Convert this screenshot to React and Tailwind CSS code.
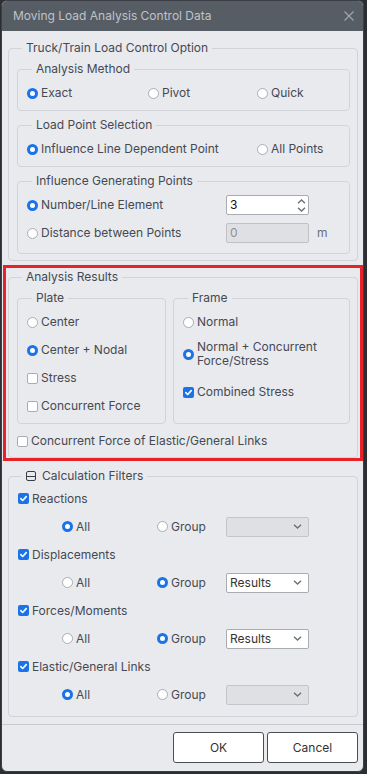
import clsx from 'clsx'

function Radio({ on }) {
    return on
        ? <span className="block w-[11px] h-[11px] shrink-0 rounded-full border-[3px] border-[#1a73e8] bg-white" />
        : <span className="block w-[11px] h-[11px] shrink-0 rounded-full border border-[#a9acb2] bg-white" />
}

function Check({ on }) {
    if (!on) return <span className="block w-[11px] h-[11px] shrink-0 rounded-[2px] border border-[#a9acb2] bg-white" />
    return (
        <span className="flex items-center justify-center w-[11px] h-[11px] shrink-0 rounded-[2px] bg-[#1a73e8]">
            <svg width="9" height="9" viewBox="0 0 9 9">
                <path d="M1.8 4.6 L3.7 6.5 L7.2 2.6" fill="none" stroke="white" strokeWidth="1.6" strokeLinecap="round" strokeLinejoin="round" />
            </svg>
        </span>
    )
}

function Opt({ radio, on, label, className }) {
    return (
        <div className={clsx('flex items-center', className)}>
            {radio ? <Radio on={on} /> : <Check on={on} />}
            <span className="ml-[3px] whitespace-nowrap">{label}</span>
        </div>
    )
}

function Group({ label, className, children }) {
    return (
        <fieldset className={clsx('border border-[#d2d3d8] rounded-[4px] min-w-0', className)}>
            <legend className="ml-[5px] px-[4px] leading-[16px]">{label}</legend>
            {children}
        </fieldset>
    )
}

function Chevron({ up }) {
    return (
        <svg width="9" height="5" viewBox="0 0 9 5">
            <path d={up ? 'M1 4.2 L4.5 1 L8 4.2' : 'M1 0.8 L4.5 4 L8 0.8'} fill="none" stroke="#6c7077" strokeWidth="1.4" />
        </svg>
    )
}

function Select({ value }) {
    return (
        <div className={clsx('w-[83px] h-[20px] rounded-[2px] border flex items-center justify-between pl-[3px] pr-[6px]',
            value ? 'bg-white border-[#a9acb2]' : 'bg-[#dfe0e4] border-[#c3c5ca]')}>
            <span className="text-[#333]">{value}</span>
            <Chevron />
        </div>
    )
}

function FilterRows({ label, all, value }) {
    return (
        <>
            <div className="h-[27px] flex items-center">
                <Opt on label={label} />
            </div>
            <div className="h-[29px] flex items-center pl-[44px]">
                <Opt radio on={all} label="All" className="w-[95px]" />
                <Opt radio on={!all} label="Group" className="w-[69px]" />
                <Select value={value} />
            </div>
        </>
    )
}

export default function App() {
    return (
        <div className="min-h-screen bg-[#2b2f34] pl-[1px] font-['Inter',sans-serif] text-[12px] text-[#454952]">
            <div className="w-[363px] h-[772px] flex flex-col overflow-hidden rounded-[6px] border border-[#3b3f45] bg-[#e9eaee]">
                <div className="h-[30px] shrink-0 bg-[#575d65] flex items-center justify-between pl-[11px] pr-[9px]">
                    <span className="text-[#bfc3c8]">Moving Load Analysis Control Data</span>
                    <svg width="10" height="10" viewBox="0 0 10 10">
                        <path d="M0.5 0.5 L9.5 9.5 M9.5 0.5 L0.5 9.5" stroke="#a2a7ad" strokeWidth="1.1" />
                    </svg>
                </div>

                <div className="pl-[6px] pr-[5px] pt-[9px]">
                    <Group label="Truck/Train Load Control Option" className="pl-[8px] pr-[7px] pt-[5px] pb-[6px]">
                        <div className="flex flex-col gap-[6px]">
                            <Group label="Analysis Method" className="pl-[9px] pt-[6px] pb-[7px]">
                                <div className="h-[20px] flex items-center">
                                    <Opt radio on label="Exact" className="w-[121px]" />
                                    <Opt radio label="Pivot" className="w-[109px]" />
                                    <Opt radio label="Quick" />
                                </div>
                            </Group>
                            <Group label="Load Point Selection" className="pl-[9px] pt-[6px] pb-[7px]">
                                <div className="h-[20px] flex items-center">
                                    <Opt radio on label="Influence Line Dependent Point" className="w-[230px]" />
                                    <Opt radio label="All Points" />
                                </div>
                            </Group>
                            <Group label="Influence Generating Points" className="pl-[9px] pt-[2px] pb-[6px]">
                                <div className="h-[28px] flex items-center">
                                    <Opt radio on label="Number/Line Element" className="w-[199px]" />
                                    <div className="w-[83px] h-[20px] rounded-[2px] border border-[#a9acb2] bg-white flex items-center justify-between pl-[3px] pr-[2px]">
                                        <span className="text-[#111]">3</span>
                                        <div className="flex flex-col gap-[3px]">
                                            <Chevron up />
                                            <Chevron />
                                        </div>
                                    </div>
                                </div>
                                <div className="h-[28px] flex items-center">
                                    <Opt radio label="Distance between Points" className="w-[199px]" />
                                    <div className="w-[83px] h-[20px] rounded-[2px] border border-[#bfc1c6] bg-[#dfe0e4] flex items-center pl-[3px]">
                                        <span className="text-[#8d9096]">0</span>
                                    </div>
                                    <span className="ml-[8px] text-[#6a6e75]">m</span>
                                </div>
                            </Group>
                        </div>
                    </Group>

                    <div className="mt-[4px] -mx-[5px] px-[2px] pt-[1px] border-[3px] border-[#e8222b]">
                        <Group label="Analysis Results" className="pl-[8px] pr-[7px] pt-[5px] pb-[2px]">
                            <div className="grid grid-cols-[149px_1fr] gap-[7px]">
                                <Group label="Plate" className="pl-[9px] pt-[2px] pb-[3px]">
                                    <div className="h-[28px] flex items-center"><Opt radio label="Center" /></div>
                                    <div className="h-[28px] flex items-center"><Opt radio on label="Center + Nodal" /></div>
                                    <div className="h-[28px] flex items-center"><Opt label="Stress" /></div>
                                    <div className="h-[28px] flex items-center"><Opt label="Concurrent Force" /></div>
                                </Group>
                                <Group label="Frame" className="pl-[9px] pt-[2px] pb-[3px]">
                                    <div className="h-[28px] flex items-center"><Opt radio label="Normal" /></div>
                                    <div className="h-[42px] pt-[4px]">
                                        <div className="flex items-center">
                                            <Radio on />
                                            <span className="ml-[3px] leading-[14px]">Normal + Concurrent<br />Force/Stress</span>
                                        </div>
                                    </div>
                                    <div className="h-[28px] flex items-center"><Opt on label="Combined Stress" /></div>
                                </Group>
                            </div>
                            <div className="mt-[3px] h-[28px] flex items-center">
                                <Opt label="Concurrent Force of Elastic/General Links" />
                            </div>
                        </Group>
                    </div>

                    <fieldset className="mt-[7px] border border-[#d2d3d8] rounded-[4px] pl-[9px] pt-[1px] pb-[7px]">
                        <legend className="ml-[4px] px-[4px] leading-[16px] flex items-center">
                            <span className="w-[10px] h-[10px] rounded-[2px] border border-[#3a3d44] flex items-center">
                                <span className="block w-full h-[1px] bg-[#3a3d44]" />
                            </span>
                            <span className="ml-[6px]">Calculation Filters</span>
                        </legend>
                        <FilterRows label="Reactions" all />
                        <FilterRows label="Displacements" value="Results" />
                        <FilterRows label="Forces/Moments" value="Results" />
                        <FilterRows label="Elastic/General Links" all />
                    </fieldset>
                </div>

                <div className="mt-auto border-t border-[#c9cace] h-[47px] shrink-0 flex justify-end items-start gap-[3px] pt-[7px] pr-[5px]">
                    <button className="w-[91px] h-[31px] rounded-[3px] border border-[#4b4e54] bg-white text-[#333]">OK</button>
                    <button className="w-[91px] h-[31px] rounded-[3px] border border-[#4b4e54] bg-white text-[#333]">Cancel</button>
                </div>
            </div>
        </div>
    )
}
